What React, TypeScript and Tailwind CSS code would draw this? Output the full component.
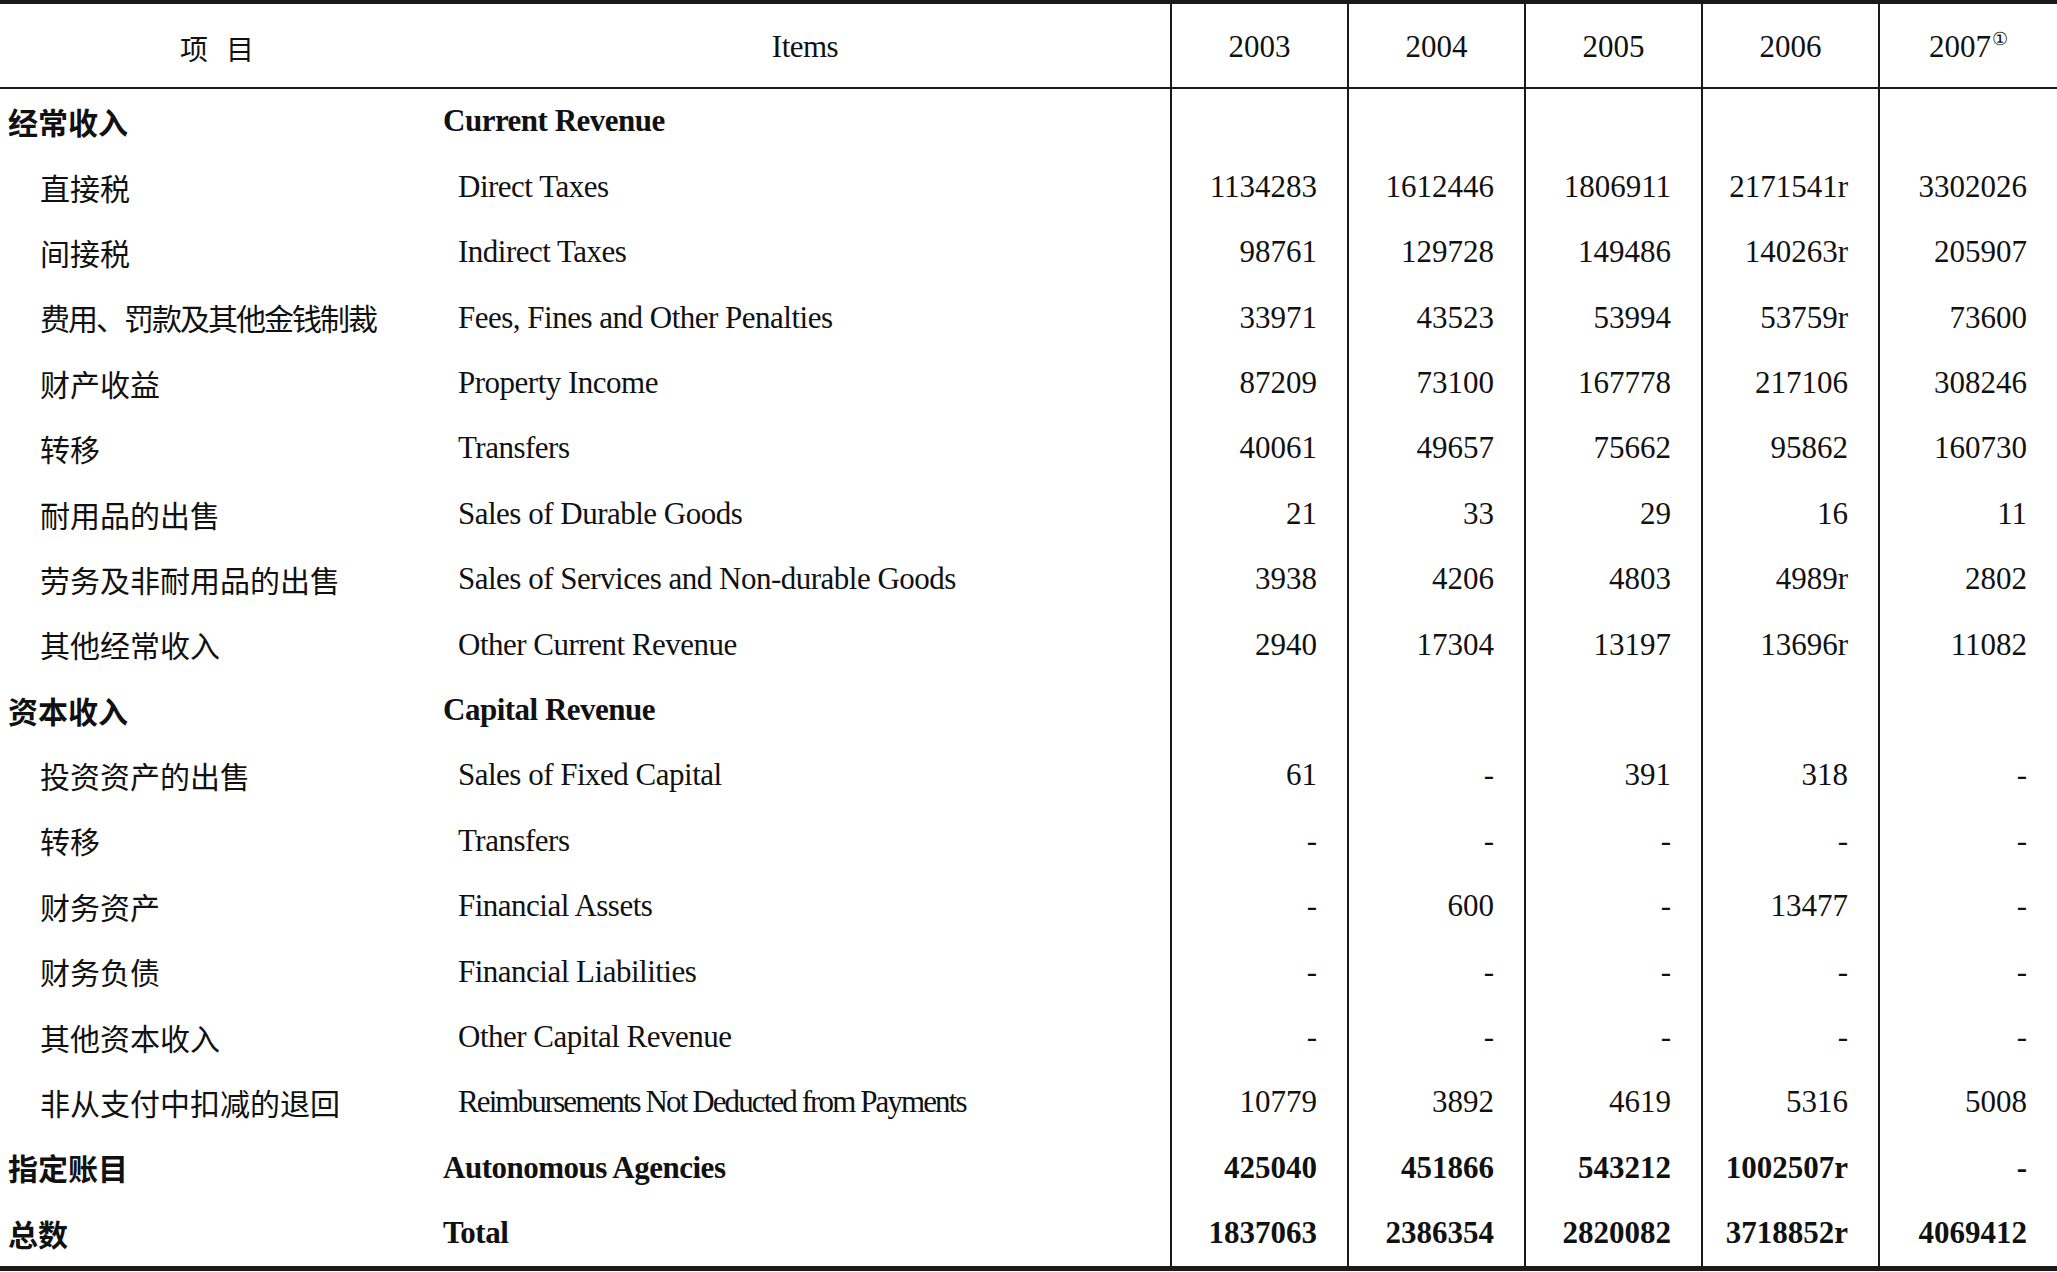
import React from 'react'

type Row = {
  zh: string
  en: string
  values?: string[]
  kind?: 'category' | 'item' | 'total'
}

const years = ['2003', '2004', '2005', '2006']

const rows: Row[] = [
  { zh: '经常收入', en: 'Current Revenue', kind: 'category' },
  { zh: '直接税', en: 'Direct Taxes', values: ['1134283', '1612446', '1806911', '2171541r', '3302026'] },
  { zh: '间接税', en: 'Indirect Taxes', values: ['98761', '129728', '149486', '140263r', '205907'] },
  { zh: '费用、罚款及其他金钱制裁', en: 'Fees, Fines and Other Penalties', values: ['33971', '43523', '53994', '53759r', '73600'] },
  { zh: '财产收益', en: 'Property Income', values: ['87209', '73100', '167778', '217106', '308246'] },
  { zh: '转移', en: 'Transfers', values: ['40061', '49657', '75662', '95862', '160730'] },
  { zh: '耐用品的出售', en: 'Sales of Durable Goods', values: ['21', '33', '29', '16', '11'] },
  { zh: '劳务及非耐用品的出售', en: 'Sales of Services and Non-durable Goods', values: ['3938', '4206', '4803', '4989r', '2802'] },
  { zh: '其他经常收入', en: 'Other Current Revenue', values: ['2940', '17304', '13197', '13696r', '11082'] },
  { zh: '资本收入', en: 'Capital Revenue', kind: 'category' },
  { zh: '投资资产的出售', en: 'Sales of Fixed Capital', values: ['61', '-', '391', '318', '-'] },
  { zh: '转移', en: 'Transfers', values: ['-', '-', '-', '-', '-'] },
  { zh: '财务资产', en: 'Financial Assets', values: ['-', '600', '-', '13477', '-'] },
  { zh: '财务负债', en: 'Financial Liabilities', values: ['-', '-', '-', '-', '-'] },
  { zh: '其他资本收入', en: 'Other Capital Revenue', values: ['-', '-', '-', '-', '-'] },
  { zh: '非从支付中扣减的退回', en: 'Reimbursements Not Deducted from Payments', values: ['10779', '3892', '4619', '5316', '5008'] },
  { zh: '指定账目', en: 'Autonomous Agencies', values: ['425040', '451866', '543212', '1002507r', '-'], kind: 'total' },
  { zh: '总数', en: 'Total', values: ['1837063', '2386354', '2820082', '3718852r', '4069412'], kind: 'total' },
]

const grid = 'grid grid-cols-[440px_730px_177px_177px_177px_177px_1fr]'
const zhFont = "font-['Noto_Sans_CJK_SC',sans-serif]"
const yearCell = 'border-l-2 border-[#1a1a1a]'

export default function App() {
  return (
    <div className="w-[2057px] bg-white text-[#111] font-['Liberation_Serif','Times_New_Roman',serif]">
      <div className="border-t-4 border-b-[5px] border-[#1a1a1a]">
        {/* Header */}
        <div className={`${grid} h-[85px] border-b-2 border-[#1a1a1a]`}>
          <div className={`flex items-center justify-center gap-[18px] pt-[4px] pr-[6px] text-[28px] ${zhFont}`}>
            <span>项</span>
            <span>目</span>
          </div>
          <div className="flex items-center justify-center pt-[4px] text-[31px] tracking-[-0.5px]">Items</div>
          {years.map((y) => (
            <div key={y} className={`${yearCell} flex items-center justify-center pt-[4px] text-[31px]`}>
              {y}
            </div>
          ))}
          <div className={`${yearCell} flex items-center justify-center pt-[4px] text-[31px]`}>
            <span>2007</span>
            <span className="self-start mt-[22px] ml-[1px] text-[18px] leading-none font-['DejaVu_Serif',serif]">①</span>
          </div>
        </div>

        {/* Body */}
        {rows.map((row, i) => {
          const bold = row.kind === 'category' || row.kind === 'total'
          const long = row.en.startsWith('Reimbursements')
          const tight = row.zh.includes('、')
          return (
            <div key={i} className={`${grid} h-[65.4px]`}>
              <div
                className={`flex items-center text-[30px] ${zhFont} ${
                  bold ? 'pl-[8px] font-bold' : 'pl-[40px]'
                } ${tight ? 'tracking-[-2px]' : ''}`}
              >
                {row.zh}
              </div>
              <div
                className={`flex items-center text-[31px] whitespace-nowrap ${
                  bold ? 'pl-[3px] font-bold' : 'pl-[18px]'
                } ${long ? 'tracking-[-1.9px]' : 'tracking-[-0.5px]'}`}
              >
                {row.en}
              </div>
              {Array.from({ length: 5 }, (_, j) => (
                <div
                  key={j}
                  className={`${yearCell} flex items-center justify-end pr-[30px] text-[31px] ${
                    row.kind === 'total' ? 'font-bold' : ''
                  }`}
                >
                  {row.values ? row.values[j] : ''}
                </div>
              ))}
            </div>
          )
        })}
      </div>
    </div>
  )
}
